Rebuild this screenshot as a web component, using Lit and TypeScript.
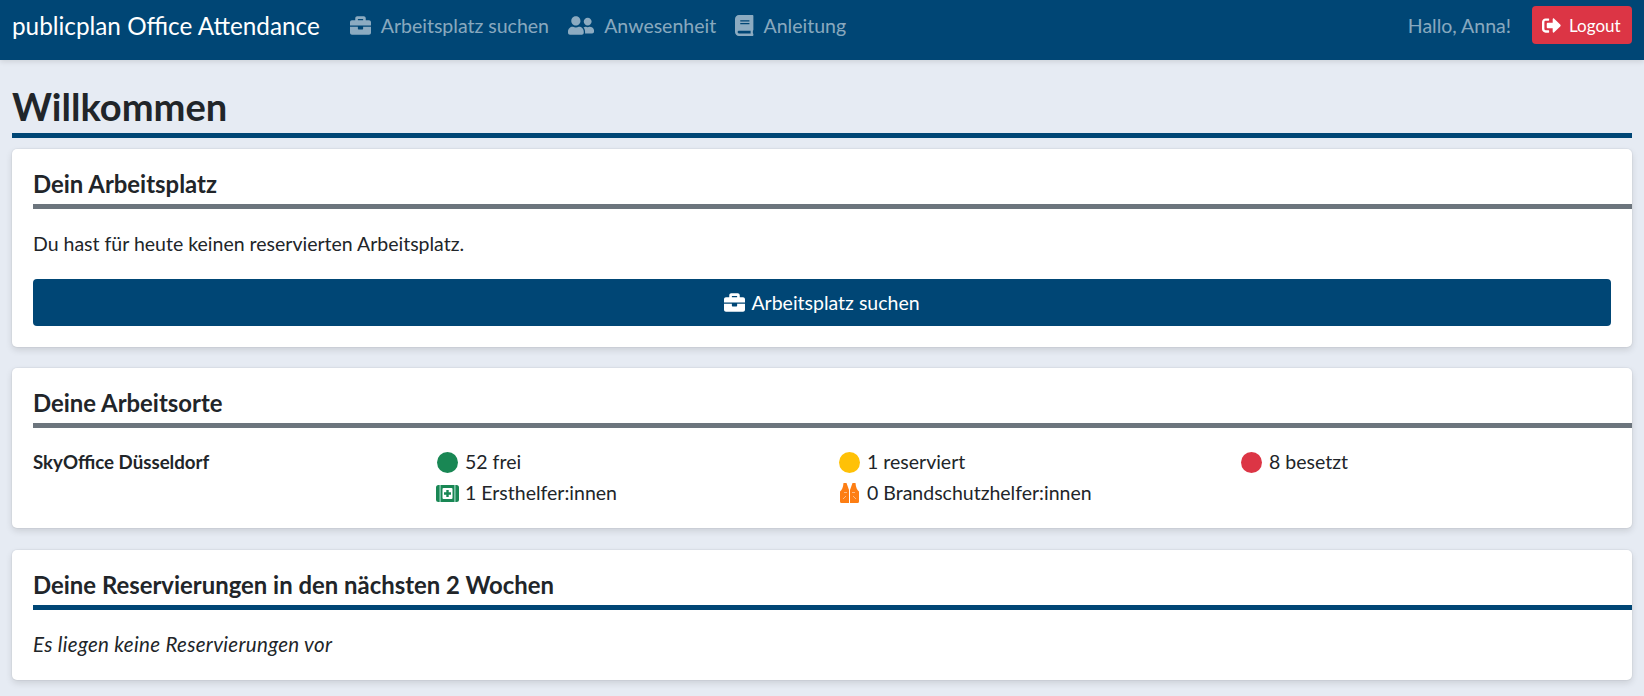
import { LitElement, html, css, svg } from "lit";
import { customElement } from "lit/decorators.js";

const briefcase = svg`<path d="M320 336c0 8.84-7.16 16-16 16h-96c-8.84 0-16-7.16-16-16v-48H0v144c0 25.6 22.4 48 48 48h416c25.6 0 48-22.4 48-48V288H320v48zm144-208h-80V80c0-25.6-22.4-48-48-48H176c-25.6 0-48 22.4-48 48v48H48c-25.6 0-48 22.4-48 48v80h512v-80c0-25.6-22.4-48-48-48zm-144 0H192V96h128v32z"/>`;
const friends = svg`<path d="M192 256c61.9 0 112-50.1 112-112S253.9 32 192 32 80 82.1 80 144s50.1 112 112 112zm76.8 32h-8.3c-20.8 10-43.9 16-68.5 16s-47.6-6-68.5-16h-8.3C51.6 288 0 339.6 0 403.2V432c0 26.5 21.5 48 48 48h288c26.5 0 48-21.5 48-48v-28.8c0-63.6-51.6-115.2-115.2-115.2zM480 256c53 0 96-43 96-96s-43-96-96-96-96 43-96 96 43 96 96 96zm48 32h-3.8c-13.9 4.8-28.6 8-44.2 8s-30.3-3.2-44.2-8H432c-20.4 0-39.2 5.9-55.7 15.4 24.4 26.3 39.7 61.2 39.7 99.8v38.4c0 2.2-.5 4.3-.6 6.4H592c26.5 0 48-21.5 48-48 0-61.9-50.1-112-112-112z"/>`;
const book = svg`<path d="M448 360V24c0-13.3-10.7-24-24-24H96C43 0 0 43 0 96v320c0 53 43 96 96 96h328c13.3 0 24-10.7 24-24v-16c0-7.5-3.5-14.3-8.9-18.7-4.2-15.4-4.2-59.3 0-74.7 5.4-4.3 8.9-11.1 8.9-18.6zM128 134c0-3.3 2.7-6 6-6h212c3.3 0 6 2.7 6 6v20c0 3.3-2.7 6-6 6H134c-3.3 0-6-2.7-6-6v-20zm0 64c0-3.3 2.7-6 6-6h212c3.3 0 6 2.7 6 6v20c0 3.3-2.7 6-6 6H134c-3.3 0-6-2.7-6-6v-20zm253.4 250H96c-17.7 0-32-14.3-32-32 0-17.6 14.4-32 32-32h285.4c-1.9 17.1-1.9 46.9 0 64z"/>`;
const signout = svg`<path d="M497 273L329 441c-15 15-41 4.5-41-17v-96H152c-13.3 0-24-10.7-24-24v-96c0-13.3 10.7-24 24-24h136V88c0-21.4 25.9-32 41-17l168 168c9.3 9.4 9.3 24.6 0 34zM192 436v-40c0-6.6-5.4-12-12-12H96c-17.7 0-32-14.3-32-32V160c0-17.7 14.3-32 32-32h84c6.6 0 12-5.4 12-12V76c0-6.6-5.4-12-12-12H96c-53 0-96 43-96 96v192c0 53 43 96 96 96h84c6.6 0 12-5.4 12-12z"/>`;

function icon(vb: string, body: unknown) {
  return html`<svg viewBox=${vb} fill="currentColor" aria-hidden="true">${body}</svg>`;
}

@customElement("app-root")
export class AppRoot extends LitElement {
  static styles = css`
    :host {
      display: block;
      font-family: "Lato", "Liberation Sans", sans-serif;
      font-size: 19.5px;
      line-height: 27px;
      color: #212529;
      background: #e6ebf3;
      min-height: 696px;
    }
    nav {
      height: 60px;
      background: #004675;
      display: flex;
      align-items: center;
      padding: 0 12px 10px;
      box-shadow: 0 2px 5px rgba(0, 0, 0, 0.1);
      box-sizing: border-box;
    }
    .brand { color: #fff; font-size: 24.3px; margin-right: 30px; white-space: nowrap; }
    .links { display: flex; gap: 19px; flex: 1; }
    .link { display: flex; align-items: center; gap: 10px; color: rgba(255,255,255,.55); white-space: nowrap; }
    .link svg { height: 21px; }
    .hello { color: rgba(255,255,255,.55); margin-right: 21px; }
    .logout {
      display: flex; align-items: center; gap: 8px;
      background: #dc3545; color: #fff; border-radius: 4px;
      width: 100px; height: 38px; padding: 0 0 0 10px; font-size: 17px; box-sizing: border-box;
    }
    .logout svg { height: 19px; }
    main { padding: 22px 12px 0; }
    h1 { margin: 0; font-size: 38.1px; line-height: 48px; font-weight: 700; padding-bottom: 3px; border-bottom: 5px solid #004675; }
    .card {
      background: #fff; border-radius: 5px; margin-top: 11px;
      padding: 20px 0 21px 21px;
      box-shadow: 0 0 0 1px rgba(0,0,0,.03), 0 3px 7px rgba(0,0,0,.12);
    }
    .card + .card { margin-top: 21px; }
    .card:last-child { margin-top: 22px; padding-bottom: 22px; }
    h2 { margin: 0; font-size: 23.9px; line-height: 30px; font-weight: 700; padding-bottom: 5px; border-bottom: 5px solid #6c757d; }
    h2.blue { border-bottom-color: #004675; }
    p { margin: 21px 0 0; }
    .cta {
      margin: 22px 21px 0 0; height: 47px; border-radius: 4px; background: #004675; color: #fff;
      display: flex; align-items: center; justify-content: center; gap: 6px;
    }
    .cta svg { height: 21px; }
    .grid { display: grid; grid-template-columns: 403px 402px 402px 402px; margin-top: 20px; row-gap: 3px; line-height: 28px; }
    .grid b { font-weight: 700; font-size: 18.7px; }
    .st { display: flex; align-items: center; gap: 6px; }
    .ico { width: 23px; height: 21px; flex: none; display: flex; align-items: center; justify-content: center; }
    .dot { width: 21px; height: 21px; border-radius: 50%; }
    .kit { width: 23px; height: 17px; }
    .vest { width: 19px; height: 20px; }
    em { display: block; margin-top: 21px; font-size: 20.5px; letter-spacing: 0.32px; }
  `;

  render() {
    return html`
      <nav>
        <span class="brand">publicplan Office Attendance</span>
        <div class="links">
          <span class="link">${icon("0 0 512 512", briefcase)}Arbeitsplatz suchen</span>
          <span class="link">${icon("0 0 640 512", friends)}Anwesenheit</span>
          <span class="link">${icon("0 0 448 512", book)}Anleitung</span>
        </div>
        <span class="hello">Hallo, Anna!</span>
        <span class="logout">${icon("0 0 512 512", signout)}Logout</span>
      </nav>
      <main>
        <h1>Willkommen</h1>
        <section class="card">
          <h2>Dein Arbeitsplatz</h2>
          <p>Du hast für heute keinen reservierten Arbeitsplatz.</p>
          <div class="cta">${icon("0 0 512 512", briefcase)}Arbeitsplatz suchen</div>
        </section>
        <section class="card">
          <h2>Deine Arbeitsorte</h2>
          <div class="grid">
            <b>SkyOffice Düsseldorf</b>
            <span class="st"><span class="ico"><i class="dot" style="background:#198754"></i></span>52 frei</span>
            <span class="st"><span class="ico"><i class="dot" style="background:#ffc107"></i></span>1 reserviert</span>
            <span class="st"><span class="ico"><i class="dot" style="background:#dc3545"></i></span>8 besetzt</span>
            <span></span>
            <span class="st">
              <span class="ico"><svg class="kit" viewBox="0 0 23 17"><rect width="23" height="17" rx="2.5" fill="#198754"/><path d="M3.500 0h1.200v17h-1.200zM18.300 0h1.200v17h-1.200z" fill="#9fd8c4"/><rect x="6.500" y="3" width="10" height="11" rx="1" fill="#fff"/><path d="M10.300 5h2.400v2.300H15v2.400h-2.300V12h-2.400V9.700H8V7.300h2.300z" fill="#198754"/></svg></span>
              1 Ersthelfer:innen
            </span>
            <span class="st">
              <span class="ico"><svg class="vest" viewBox="0 0 19 20"><path d="M3.500 0H6.500L9 7V20H1.500A1.500 1.500 0 0 1 0 18.500V8.500C1.800 7 3.200 4.500 3.500 0zM15.500 0H12.500L10 7V20H17.500A1.500 1.500 0 0 0 19 18.500V8.500C17.200 7 15.800 4.500 15.500 0z" fill="#fd7e14"/><path d="M4 9.500h3M12 9.500h3M3 16l3-3M16 16l-3-3" stroke="#fff" stroke-width=".8" opacity=".6" fill="none"/></svg></span>
              0 Brandschutzhelfer:innen
            </span>
          </div>
        </section>
        <section class="card">
          <h2 class="blue">Deine Reservierungen in den nächsten 2 Wochen</h2>
          <em>Es liegen keine Reservierungen vor</em>
        </section>
      </main>
    `;
  }
}
